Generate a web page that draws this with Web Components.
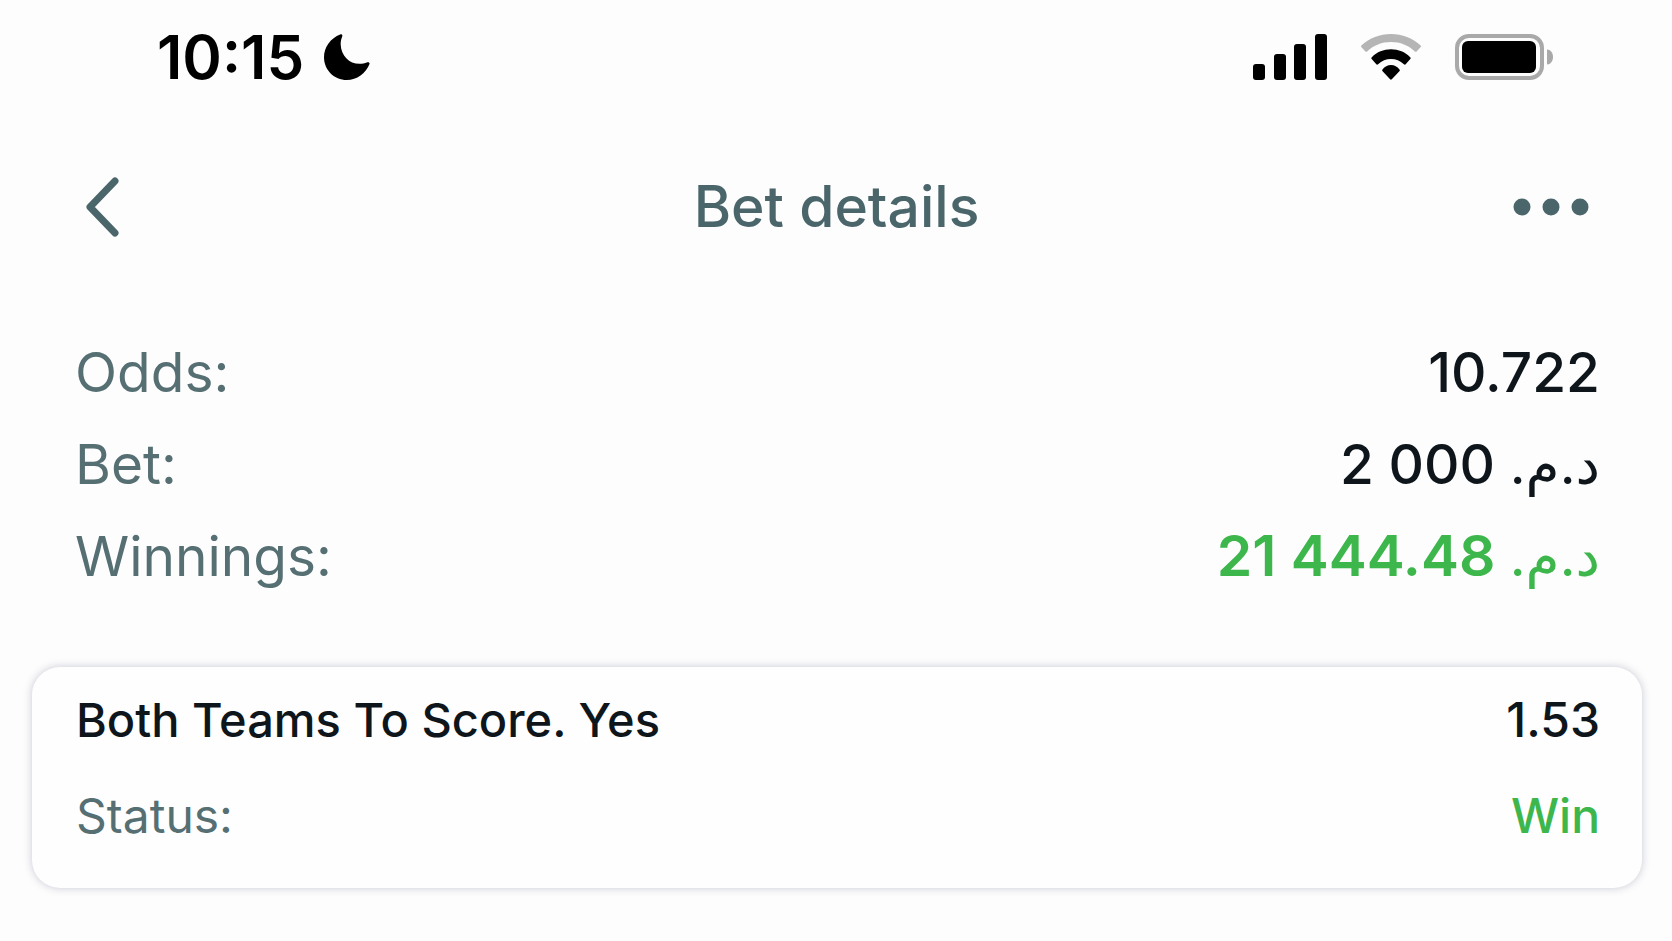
<!DOCTYPE html>
<html lang="en">
<head>
<meta charset="utf-8">
<meta name="viewport" content="width=device-width, initial-scale=1">
<title>Bet details</title>
<style>
  body {
    margin: 0;
    background: #fdfdfd;
    color: #0e161b;
    font-family: Inter, "DejaVu Sans", sans-serif;
    --muted: #566f73;
    --heading: #4b666b;
    --win: #3db64c;
  }
</style>
</head>
<body>
<bet-page>
  <status-bar slot="status" time="10:15"></status-bar>
  <nav-bar slot="nav">Bet details</nav-bar>
  <info-row label="Odds:">10.722</info-row>
  <info-row label="Bet:">2 000 <bdi dir="rtl">د.م.</bdi></info-row>
  <info-row label="Winnings:" type="win">21 444.48 <bdi dir="rtl">د.م.</bdi></info-row>
  <bet-card slot="card" name="Both Teams To Score. Yes" odds="1.53" status="Win"></bet-card>
</bet-page>

<script>
// Page layout
const PageTemplate = document.createElement('template');
PageTemplate.innerHTML = `
  <style>
    :host {
      display: block;
    }
    .rows {
      display: flex;
      flex-direction: column;
      gap: 24px;
      padding: 97px 72px 0 75px;
    }
    .card {
      padding: 77px 30px 48px 32px;
    }
  </style>
  <slot name="status"></slot>
  <slot name="nav"></slot>
  <main>
    <div class="rows"><slot></slot></div>
    <div class="card"><slot name="card"></slot></div>
  </main>`;

class BetPage extends HTMLElement {
  constructor() {
    super();
    this.attachShadow({mode: 'open'});
    this.shadowRoot.appendChild(PageTemplate.content.cloneNode(true));
  }
}

// Phone status bar
const StatusTemplate = document.createElement('template');
StatusTemplate.innerHTML = `
  <style>
    :host {
      display: flex;
      justify-content: space-between;
      align-items: center;
      padding: 23px 119px 0 157px;
      color: #000;
    }
    .left, .right {
      display: flex;
      align-items: center;
    }
    .left {
      gap: 20px;
    }
    .right {
      gap: 34px;
    }
    time {
      font-size: 60px;
      line-height: 68px;
      font-weight: 600;
    }
    svg {
      display: block;
    }
  </style>
  <div class="left">
    <time></time>
    <svg width="46" height="46" viewBox="0 0 46 46" role="img" aria-label="Do not disturb">
      <path d="M16.2.4c1.4-.7 2.6.5 2 2-1.2 3-1.6 5.500-1.500 8.300C17.200 21.500 25 29.800 35.500 29.800c2.800 0 5.200-.5 7.800-1.500 1.500-.6 2.700.5 2.100 2C41.700 39.500 33 46 22.800 46 10.200 46 0 35.900 0 23.200 0 12.900 6.700 4 16.200.4z"/>
    </svg>
  </div>
  <div class="right">
    <svg width="74" height="46" viewBox="0 0 74 46" role="img" aria-label="Signal">
      <rect x="0" y="30" width="12" height="16" rx="3"/>
      <rect x="21" y="20" width="12" height="26" rx="3"/>
      <rect x="41" y="10" width="12" height="36" rx="3"/>
      <rect x="62" y="0" width="12" height="46" rx="3"/>
    </svg>
    <svg width="60" height="46" viewBox="0 0 60 46" role="img" aria-label="Wi-Fi">
      <path fill="#b5b5b5" d="M.6 11.200C8.500 4 18.600 0 30 0s21.500 4 29.400 11.200c.7.7.7 1.400.1 2.100l-3.700 4c-.6.700-1.300.7-2 .1C47.300 11.300 39.300 8 30 8S12.700 11.300 6.200 17.400c-.7.6-1.400.6-2-.1l-3.700-4c-.6-.7-.6-1.400.1-2.100z"/>
      <path d="M10.800 23.200C16 18 22.500 15.300 30 15.300S44 18 49.200 23.200c.6.600.6 1.200.1 1.900l-4.400 5c-.6.700-1.300.7-2 .1-3.700-3.300-8-5.100-12.900-5.100s-9.200 1.800-12.900 5.100c-.7.6-1.400.6-2-.1l-4.400-5c-.5-.7-.5-1.300.1-1.900z"/>
      <path d="M21.500 35.500C23.700 32.600 26.500 31 30 31s6.300 1.600 8.500 4.500c.5.700.5 1.200-.1 1.800l-7.600 8c-.6.600-1.100.6-1.700 0l-7.500-8c-.6-.6-.6-1.100-.1-1.800z"/>
    </svg>
    <svg width="98" height="46" viewBox="0 0 98 46" role="img" aria-label="Battery">
      <rect x="2" y="2" width="85" height="42" rx="12" fill="none" stroke="#a9a9a9" stroke-width="4"/>
      <rect x="7" y="7" width="74" height="32" rx="6"/>
      <path fill="#a9a9a9" d="M92 15.500c3.500 0 6 3.300 6 7.500s-2.500 7.500-6 7.500z"/>
    </svg>
  </div>`;

class StatusBar extends HTMLElement {
  constructor() {
    super();
    this.attachShadow({mode: 'open'});
    this.shadowRoot.appendChild(StatusTemplate.content.cloneNode(true));
    this.shadowRoot.querySelector('time').textContent = this.getAttribute('time');
  }
}

// Title with back and menu buttons
const NavTemplate = document.createElement('template');
NavTemplate.innerHTML = `
  <style>
    :host {
      display: grid;
      grid-template-columns: 1fr auto 1fr;
      align-items: center;
      padding: 82px 83px 0 84px;
      color: var(--heading);
    }
    h1 {
      margin: 0;
      font-size: 57px;
      line-height: 68px;
      font-weight: 500;
    }
    button {
      padding: 0;
      border: none;
      background: none;
      color: inherit;
      cursor: pointer;
    }
    .more {
      justify-self: end;
    }
    .back {
      justify-self: start;
    }
    svg {
      display: block;
    }
  </style>
  <button class="back" type="button" aria-label="Back">
    <svg width="36" height="60" viewBox="0 0 36 60" fill="none" stroke="currentColor" stroke-width="7" stroke-linecap="round" stroke-linejoin="round">
      <path d="M31 4 6 30 31 56"/>
    </svg>
  </button>
  <h1><slot></slot></h1>
  <button class="more" type="button" aria-label="More">
    <svg width="76" height="18" viewBox="0 0 76 18" fill="currentColor">
      <circle cx="9" cy="9" r="8.500"/>
      <circle cx="38" cy="9" r="8.500"/>
      <circle cx="67" cy="9" r="8.500"/>
    </svg>
  </button>`;

class NavBar extends HTMLElement {
  constructor() {
    super();
    this.attachShadow({mode: 'open'});
    this.shadowRoot.appendChild(NavTemplate.content.cloneNode(true));
  }
}

// Label on the left, value on the right
const RowTemplate = document.createElement('template');
RowTemplate.innerHTML = `
  <style>
    :host {
      display: flex;
      justify-content: space-between;
      font-size: 55px;
      line-height: 68px;
    }
    .label {
      color: var(--muted);
    }
    .value {
      font-weight: 500;
      white-space: nowrap;
    }
    :host([type="win"]) .value {
      color: var(--win);
      font-size: 57px;
      font-weight: 600;
    }
    ::slotted(bdi) {
      font-size: 55px;
      font-weight: 400;
    }
  </style>
  <span class="label"></span>
  <span class="value"><slot></slot></span>`;

class InfoRow extends HTMLElement {
  constructor() {
    super();
    this.attachShadow({mode: 'open'});
    this.shadowRoot.appendChild(RowTemplate.content.cloneNode(true));
    this.shadowRoot.querySelector('.label').textContent = this.getAttribute('label');
  }
}

// Card of a single event
const CardTemplate = document.createElement('template');
CardTemplate.innerHTML = `
  <style>
    :host {
      display: flex;
      flex-direction: column;
      gap: 36px;
      padding: 23px 42px 42px 44px;
      border-radius: 28px;
      background: #fefefe;
      box-shadow: 0 0 8px rgba(40, 45, 90, .25);
      font-size: 48px;
      line-height: 60px;
    }
    .line {
      display: flex;
      justify-content: space-between;
    }
    h2 {
      margin: 0;
      font-size: 47px;
      font-weight: 500;
    }
    .odds, .status {
      font-weight: 500;
    }
    .label {
      color: var(--muted);
    }
    .status {
      color: var(--win);
    }
  </style>
  <div class="line">
    <h2></h2>
    <span class="odds"></span>
  </div>
  <div class="line">
    <span class="label">Status:</span>
    <span class="status"></span>
  </div>`;

class BetCard extends HTMLElement {
  constructor() {
    super();
    this.attachShadow({mode: 'open'});
    this.shadowRoot.appendChild(CardTemplate.content.cloneNode(true));
    this.shadowRoot.querySelector('h2').textContent = this.getAttribute('name');
    this.shadowRoot.querySelector('.odds').textContent = this.getAttribute('odds');
    this.shadowRoot.querySelector('.status').textContent = this.getAttribute('status');
  }
}

customElements.define('bet-page', BetPage);
customElements.define('status-bar', StatusBar);
customElements.define('nav-bar', NavBar);
customElements.define('info-row', InfoRow);
customElements.define('bet-card', BetCard);
</script>
</body>
</html>
